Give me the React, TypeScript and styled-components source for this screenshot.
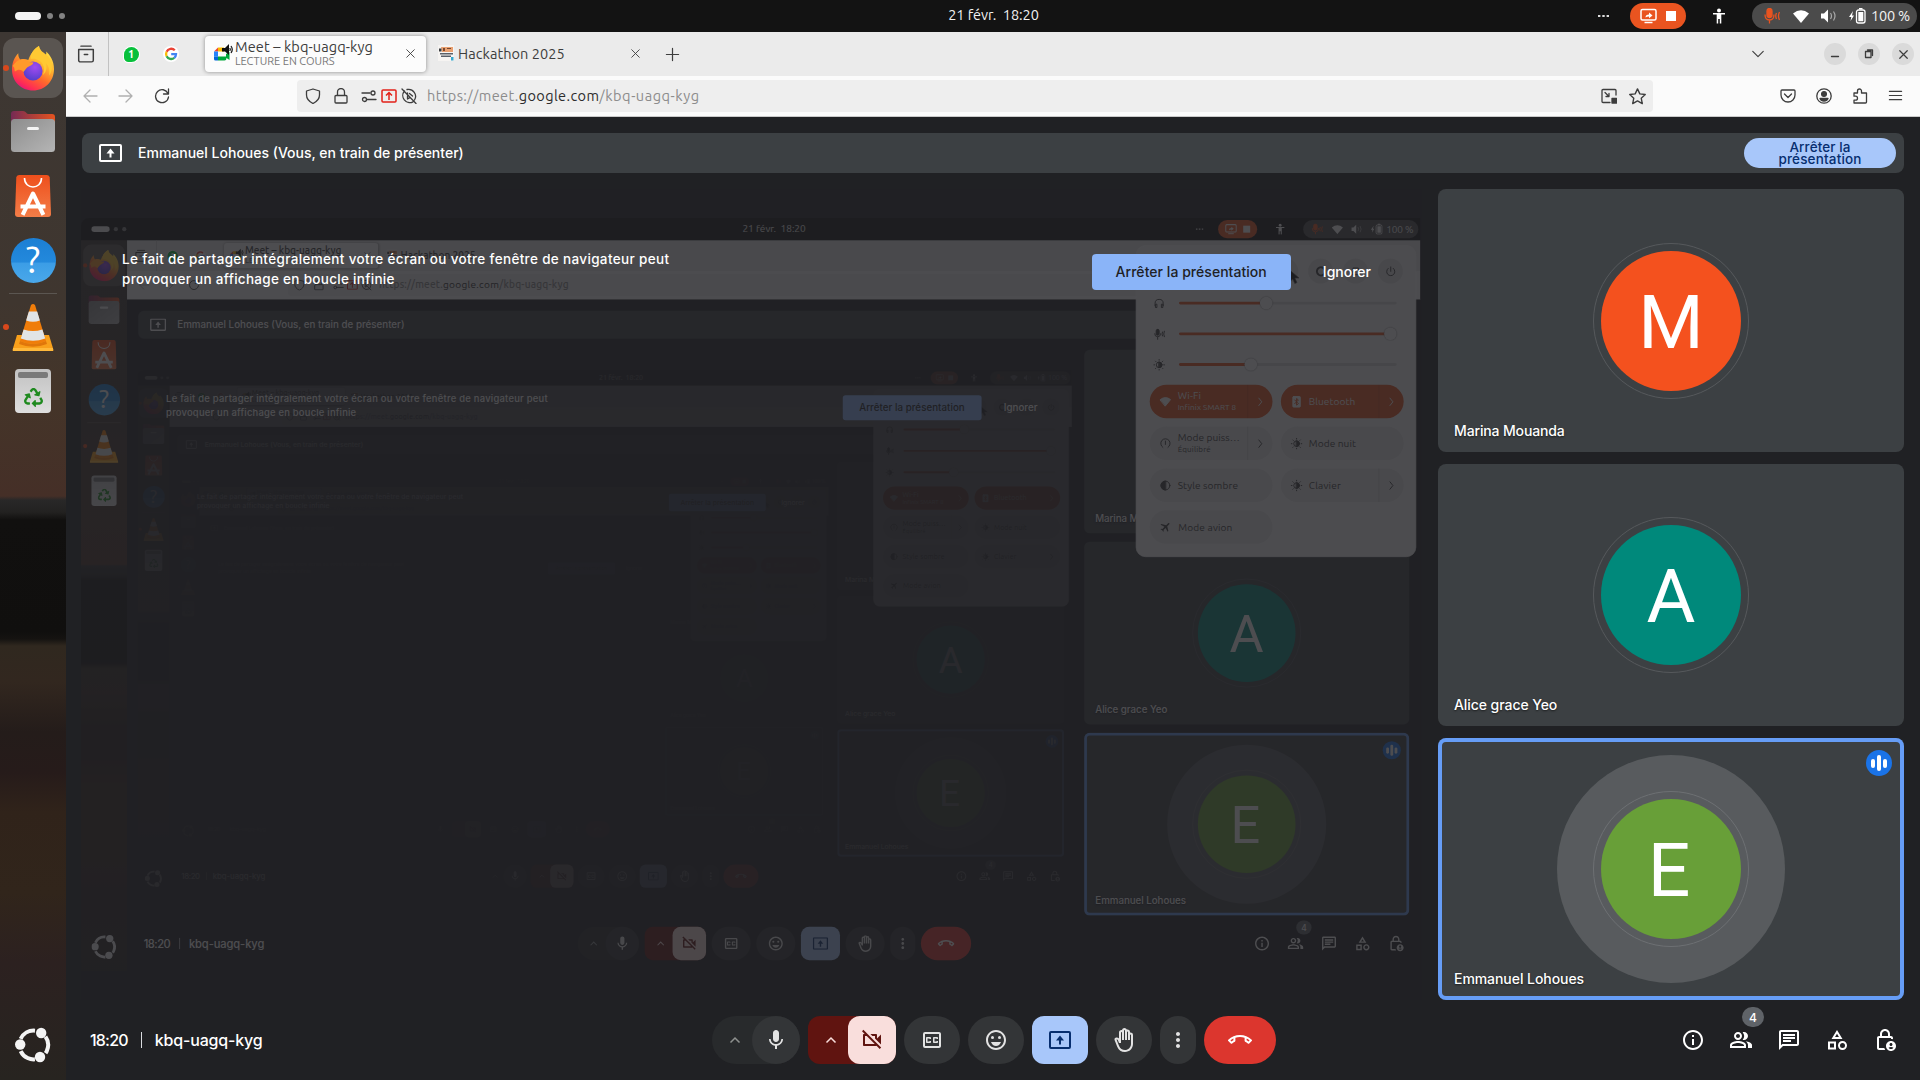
import React, { useLayoutEffect, useRef, useState } from "react";
import styled, { createGlobalStyle, css } from "styled-components";
import { FaRecycle } from "react-icons/fa";
import {
  MdFlight,
  MdMic,
  MdOutlineVideocamOff,
  MdOutlineClosedCaption,
  MdOutlineEmojiEmotions,
  MdOutlineBackHand,
  MdMoreVert,
  MdOutlineCallEnd,
  MdInfoOutline,
  MdOutlinePeopleAlt,
  MdOutlineChat,
  MdOutlineCategory,
  MdOutlineLockPerson,
} from "react-icons/md";

const GlobalStyle = createGlobalStyle`
  * { box-sizing: border-box; }
  html, body { margin: 0; padding: 0; background: #202124; }
  body { width: 1920px; height: 1080px; overflow: hidden; }
`;

const systemFont = `"Ubuntu", "Open Sans", "Noto Sans", sans-serif`;
const meetFont = `"Google Sans", "Inter", "Roboto", sans-serif`;

/* Depth to which the shared screen shows itself. */
const MAX_DEPTH = 3;
const SHARE_SCALE = 0.6976;

/* ---------- text that keeps a fixed measure ---------- */

const LabelText = styled.span`
  display: inline-block;
  white-space: pre;
`;

function Label({ measure, children }: { measure: number; children: string }) {
  const ref = useRef<HTMLSpanElement>(null);
  const [spacing, setSpacing] = useState(0);
  useLayoutEffect(() => {
    if (ref.current) {
      setSpacing((s) => s + (measure - ref.current!.offsetWidth) / children.length);
    }
  }, [measure, children]);
  return (
    <LabelText ref={ref} style={{ letterSpacing: `${spacing}px` }}>
      {children}
    </LabelText>
  );
}

/* ---------- desktop shell ---------- */

const Desktop = styled.div`
  width: 1920px;
  height: 1080px;
  display: grid;
  grid-template-rows: 32px 1048px;
  background: #202124;
  overflow: hidden;
  position: relative;
`;

const TopBar = styled.header`
  display: grid;
  grid-template-columns: 1fr auto 1fr;
  align-items: center;
  background: #131313;
  color: #f2f2f2;
  font: 400 14.5px/32px ${systemFont};
`;

const Workspaces = styled.div`
  display: flex;
  align-items: center;
  gap: 6px;
  padding-left: 15px;
`;

const WorkspaceDot = styled.i<{ $current?: boolean }>`
  width: ${(p) => (p.$current ? 26 : 6)}px;
  height: ${(p) => (p.$current ? 8 : 6)}px;
  border-radius: 4px;
  background: ${(p) => (p.$current ? "#f4f4f4" : "#828282")};
`;

const Clock = styled.div`
  padding: 0 0 2px 67px;
  line-height: 30px;
`;

const Indicators = styled.div`
  display: flex;
  align-items: center;
  justify-content: flex-end;
  padding-right: 3px;
`;

const SharePill = styled.div`
  display: flex;
  align-items: center;
  justify-content: center;
  gap: 9px;
  width: 56px;
  height: 26px;
  border-radius: 13px;
  background: #e95420;
  margin: 0 26px 0 21px;
`;

const StopSquare = styled.i`
  width: 10px;
  height: 10px;
  background: #fff;
`;

const StatusPill = styled.div`
  display: flex;
  align-items: center;
  width: 165px;
  height: 26px;
  border-radius: 13px;
  background: #4b4b4b;
  margin-left: 26px;
  padding-left: 11px;
  line-height: 26px;
`;

const Workspace = styled.div`
  display: grid;
  grid-template-columns: 66px 1854px;
`;

const DockBar = styled.nav`
  display: flex;
  flex-direction: column;
  align-items: center;
  padding: 6px 0 17px;
  background: linear-gradient(
    180deg,
    #3d3733 0px,
    #3f362f 270px,
    #443529 360px,
    #452f27 464px,
    #292828 468px,
    #232221 480px,
    #11100f 488px,
    #100f0e 600px,
    #151311 607px,
    #30281f 614px,
    #32271f 650px,
    #241c1a 700px,
    #261b1a 740px,
    #30231a 780px,
    #31251b 860px,
    #2c2120 930px,
    #272420 1048px
  );
`;

const DockItem = styled.div<{ $active?: boolean; $gap?: number; $running?: boolean }>`
  position: relative;
  display: flex;
  align-items: center;
  justify-content: center;
  width: 60px;
  height: 60px;
  flex: none;
  margin-bottom: ${(p) => p.$gap ?? 4}px;
  border-radius: 12px;
  background: ${(p) => (p.$active ? "#5a5551" : "transparent")};
  ${(p) =>
    p.$running &&
    css`
      &::before {
        content: "";
        position: absolute;
        left: 0;
        top: 27px;
        width: 6px;
        height: 6px;
        border-radius: 50%;
        background: #d9481c;
      }
    `}
`;

const DockDivider = styled.hr`
  width: 48px;
  height: 1px;
  border: 0;
  margin: 0 0 3px;
  background: #5b5651;
`;

const DockSpacer = styled.div`
  flex: 1;
`;

function FirefoxLogo() {
  return (
    <svg width="44" height="46" viewBox="0 0 44 46">
      <defs>
        <linearGradient id="ffBody" x1="0.8" y1="0.05" x2="0.25" y2="1">
          <stop offset="0" stopColor="#ffe54a" />
          <stop offset="0.35" stopColor="#ffb02e" />
          <stop offset="0.6" stopColor="#ff6a2b" />
          <stop offset="0.85" stopColor="#ff2f52" />
          <stop offset="1" stopColor="#e3127f" />
        </linearGradient>
        <radialGradient id="ffGlobe" cx="0.6" cy="0.3" r="0.8">
          <stop offset="0" stopColor="#a24bf0" />
          <stop offset="1" stopColor="#4a3cc8" />
        </radialGradient>
      </defs>
      <path
        d="M28 1c.6 4.600 3.200 7 6 9.600 1.600-.4 1.400-2.600 1.200-4 3.800 3.400 7.800 9.600 7.800 17.400C43 36.500 33.800 45.500 22 45.500S1 36.500 1 24.500C1 17.500 3.500 12 7.300 8.200c-.2 2.600.6 4.600 2 6.200 3-.8 5.500-.6 8 .6 1.600-4.800 5.200-10.800 10.700-14z"
        fill="url(#ffBody)"
      />
      <circle cx="22" cy="26" r="9.600" fill="url(#ffGlobe)" />
      <path
        d="M28 1c-6.500 3.600-8.600 9-8.200 13 3.700-.6 9 .5 11.700 5 2 3.300 2 7.500.3 11 4-3 4.200-8 3-12 3 3 4.400 7.500 3.200 12.500C43 25 41.500 14.500 35 9.500 31.500 7 28.400 4.600 28 1z"
        fill="#ffc933"
      />
      <path
        d="M1.500 21c2.500-4 6-6.500 9.500-6.600 2.500 0 4.600.6 6 2.200 1.800.7 3.400.7 5.400.9-.5 2.300-2.600 3-4.600 4-2.500 1.300-3.600 3.300-5.300 5.500C10 24 7 24 4 26.500c-1-2 .2-4-2.500-5.500z"
        fill="#ff9a2a"
      />
    </svg>
  );
}

function FilesLogo() {
  return (
    <svg width="46" height="44" viewBox="0 0 46 44">
      <defs>
        <linearGradient id="flBack" x1="0" y1="0" x2="1" y2="0">
          <stop offset="0" stopColor="#762a54" />
          <stop offset="1" stopColor="#e6531f" />
        </linearGradient>
        <linearGradient id="flFront" x1="0" y1="0" x2="1" y2="1">
          <stop offset="0" stopColor="#8d8d8d" />
          <stop offset="1" stopColor="#b5b5b5" />
        </linearGradient>
      </defs>
      <path d="M1 4q0-3 3-3h9q2 0 3 1.500T18.500 4H42q3 0 3 3v14H1z" fill="url(#flBack)" />
      <rect x="1" y="9" width="44" height="33" rx="3.500" fill="url(#flFront)" />
      <rect x="17" y="17" width="12" height="3" rx="1.500" fill="#f4f4f4" />
    </svg>
  );
}

function StoreLogo() {
  return (
    <svg width="36" height="42" viewBox="0 0 36 42">
      <defs>
        <linearGradient id="stBag" x1="0" y1="0" x2="0" y2="1">
          <stop offset="0" stopColor="#ee4f1c" />
          <stop offset="1" stopColor="#f37d48" />
        </linearGradient>
      </defs>
      <path d="M4 0h28q2.500 0 2.700 2.500L36 39q0 3-3 3H3q-3 0-3-3L1.300 2.500Q1.500 0 4 0z" fill="url(#stBag)" />
      <path d="M9.500 3c0 12 17 12 17 0" fill="none" stroke="#fff" strokeWidth="1.600" />
      <path
        d="M8.500 38 18 18.500 27.500 38M7.500 31.500h21"
        fill="none"
        stroke="#fff"
        strokeWidth="4"
        strokeLinecap="square"
        strokeLinejoin="round"
      />
    </svg>
  );
}

const HelpBall = styled.div`
  width: 45px;
  height: 45px;
  border-radius: 50%;
  background: linear-gradient(180deg, #1c7fd4 0%, #2389dc 54%, #3b9de6 55%, #4aa8ea 100%);
  color: #fff;
  font: 400 37px/44px ${systemFont};
  text-align: center;
`;

function ConeLogo() {
  return (
    <svg width="42" height="48" viewBox="0 0 42 48">
      <path d="M5 32h32l4.500 15q0 1-1 1h-39q-1 0-1-1z" fill="#f9a01b" />
      <path d="M1 45h40v3H1z" fill="#ffb93b" />
      <path d="M19 2q2-2 4 0l11 36q-13 6-26 0z" fill="#f07d0a" />
      <path d="m16.800 8.500 8.400 0 2.700 9q-7 2.500-13.800 0zM11.600 26.500q9.400 3 18.800 0l2.800 9q-12.200 4.500-24.400 0z" fill="#e1e4e6" />
      <path d="M8 38q13 6 26 0l1 3q-14 5.500-28 0z" fill="#e0760a" />
    </svg>
  );
}

const TrashBin = styled.div`
  width: 36px;
  height: 44px;
  padding: 3px;
  border-radius: 4px;
  background: linear-gradient(180deg, #c2c2c2, #dedede);
  color: #1f8a1f;
  text-align: center;
  font-size: 19px;
  line-height: 0;
`;

const TrashSlot = styled.div`
  height: 6px;
  border-radius: 2px;
  margin-bottom: 10px;
  background: #7a7a7a;
`;

function UbuntuLogo() {
  return (
    <svg width="37" height="36" viewBox="0 0 37 36">
      <circle
        cx="18.700"
        cy="18"
        r="14.400"
        fill="none"
        stroke="#f4f4f4"
        strokeWidth="4"
        pathLength="360"
        strokeDasharray="70 50"
        transform="rotate(205 18.700 18)"
      />
      <circle cx="5.200" cy="17.500" r="5.200" fill="#f4f4f4" />
      <circle cx="26.200" cy="6" r="5.200" fill="#f4f4f4" />
      <circle cx="25" cy="30" r="5.200" fill="#f4f4f4" />
    </svg>
  );
}

function Dock() {
  return (
    <DockBar>
      <DockItem $active $running>
        <FirefoxLogo />
      </DockItem>
      <DockItem $gap={4}>
        <FilesLogo />
      </DockItem>
      <DockItem>
        <StoreLogo />
      </DockItem>
      <DockItem $gap={3}>
        <HelpBall>?</HelpBall>
      </DockItem>
      <DockDivider />
      <DockItem $running>
        <ConeLogo />
      </DockItem>
      <DockItem>
        <TrashBin>
          <TrashSlot />
          <FaRecycle />
        </TrashBin>
      </DockItem>
      <DockSpacer />
      <UbuntuLogo />
    </DockBar>
  );
}

/* ---------- browser chrome ---------- */

const Browser = styled.section`
  display: grid;
  grid-template-rows: 44px 41px 963px;
  font-family: ${systemFont};
`;

const TabStrip = styled.div`
  display: flex;
  align-items: center;
  background: #ebebeb;
  color: #3d3d3d;
`;

const FirefoxView = styled.div`
  display: flex;
  align-items: center;
  padding-left: 11px;
  width: 43px;
  height: 44px;
  border-right: 1px solid #c2c2c2;
`;

const PinnedTab = styled.div<{ $first?: boolean }>`
  display: flex;
  justify-content: center;
  width: 40px;
  margin-left: ${(p) => (p.$first ? 2 : 0)}px;
`;

const Tab = styled.div<{ $active?: boolean }>`
  display: flex;
  align-items: center;
  width: 221px;
  height: 36px;
  border-radius: 4px;
  padding: 0 10px 2px 8px;
  margin-left: 4px;
  font-size: 14.5px;
  ${(p) =>
    p.$active &&
    css`
      margin-left: 14px;
      background: #fcfcfc;
      box-shadow: 0 0 4px rgba(0, 0, 0, 0.4);
    `}
`;

const TabTitle = styled.div<{ $inset: number }>`
  flex: 1;
  padding-left: ${(p) => p.$inset}px;
  line-height: 17px;
`;

const TabStatus = styled.div`
  font-size: 11px;
  line-height: 13px;
  color: #777;
`;

const NewTab = styled.div`
  display: flex;
  margin-left: 14px;
`;

const StripSpacer = styled.div`
  flex: 1;
`;

const WindowButtons = styled.div`
  display: flex;
  gap: 12px;
  padding: 0 6px 0 59px;
`;

const WindowButton = styled.div`
  display: flex;
  align-items: center;
  justify-content: center;
  width: 22px;
  height: 22px;
  border-radius: 50%;
  background: #dadada;
`;

const NavBar = styled.div`
  display: grid;
  grid-template-columns: 231px 1356px 1fr;
  align-items: center;
  background: #fbfbfb;
  border-bottom: 1px solid #cacaca;
  color: #3d3d3d;
`;

const NavButtons = styled.div`
  display: flex;
  gap: 20px;
  padding-left: 16px;
`;

const UrlField = styled.div`
  display: flex;
  align-items: center;
  height: 32px;
  border-radius: 4px;
  background: #eee;
  padding: 0 7px 0 8px;
`;

const UrlIcons = styled.div<{ $gap: number }>`
  display: flex;
  align-items: center;
  gap: ${(p) => p.$gap}px;
`;

const Url = styled.div`
  flex: 1;
  padding-left: 10px;
  font-size: 14.5px;
  line-height: 30px;
  color: #8c8c8c;
  b {
    font-weight: 400;
    color: #2c2c2c;
  }
`;

const ToolIcons = styled.div`
  display: flex;
  gap: 20px;
  justify-content: flex-end;
  padding-right: 17px;
`;

const strokeIcons: Record<string, React.ReactNode> = {
  view: <path d="M3.500 1h9M1.500 4h13v9.500a1.500 1.500 0 0 1-1.500 1.500H3a1.500 1.500 0 0 1-1.500-1.500zM6.500 8.500h3" />,
  close: <path d="m4 4 8 8M12 4l-8 8" />,
  tabClose: <path d="m2.500 2.500 11 11M13.500 2.500l-11 11" />,
  plus: <path d="M8 1.500v13M1.500 8h13" />,
  down: <path d="m2 5 6 6 6-6" />,
  min: <path d="M4.500 10.500h7" />,
  restore: <path d="M4.500 5.500h5.500v6H4.500zM6.500 4h5v5.500" />,
  back: <path d="M15 8H2M8 2 2 8l6 6" />,
  forward: <path d="M1 8h13M8 2l6 6-6 6" />,
  reload: <path d="M14 5.500A6.500 6.500 0 1 0 14.500 9M14.500 1v5h-5" />,
  shield: <path d="M8 1 14.500 3v4c0 4-2.500 6.500-6.500 8.500C4 13.500 1.500 11 1.500 7V3z" />,
  lock: <path d="M3 7.500h10a1 1 0 0 1 1 1V14a1 1 0 0 1-1 1H3a1 1 0 0 1-1-1V8.500a1 1 0 0 1 1-1zM4.500 7.500V4a3.500 3.500 0 0 1 7 0v3.500" />,
  perms: (
    <>
      <path d="M1 5h8M6 11.500h9" />
      <circle cx="12" cy="5" r="2" />
      <circle cx="3.500" cy="11.500" r="2" />
    </>
  ),
  autoplay: (
    <path d="M3.500 3A7 7 0 0 0 12 13.800M6 1.500A7 7 0 0 1 13.500 12M1 1l14 14.500M6.500 5v6l2.200-1.400M8.500 5.500 11.500 8" />
  ),
  pip: (
    <>
      <path d="M15 7V2.500a1 1 0 0 0-1-1H2a1 1 0 0 0-1 1v11a1 1 0 0 0 1 1h7M4 4.500l4 4M8 5.500v3H5" />
      <rect x="11" y="10.500" width="4.500" height="4.500" fill="currentColor" />
    </>
  ),
  star: <path d="m8 .8 2.200 4.700 5.100.6-3.800 3.500 1 5.100L8 12.200l-4.500 2.500 1-5.100L.7 6.100l5.100-.6z" />,
  pocket: <path d="M2 2h12a1 1 0 0 1 1 1v4a7 7 0 0 1-14 0V3a1 1 0 0 1 1-1zM4.500 6 8 9.500 11.500 6" />,
  account: (
    <>
      <circle cx="8" cy="8" r="7.200" />
      <circle cx="8" cy="6" r="2.400" fill="currentColor" />
      <path d="M4 10.500h8q-1 2.500-4 2.500t-4-2.500z" fill="currentColor" />
    </>
  ),
  puzzle: <path d="M2 15h11.500a1 1 0 0 0 1-1V5H9.500V3a2 2 0 0 0-4 0v2H2v3.200h1.500a2 2 0 0 1 0 4H2z" />,
  menu: <path d="M1.500 3.500h13M1.500 8h13M1.500 12.500h13" />,
};

const IconSvg = styled.svg<{ $size: number; $color?: string }>`
  width: ${(p) => p.$size}px;
  height: ${(p) => p.$size}px;
  flex: none;
  fill: none;
  stroke: currentColor;
  stroke-width: 1.3;
  stroke-linecap: round;
  stroke-linejoin: round;
  color: ${(p) => p.$color ?? "inherit"};
`;

function Icon({ name, size = 16, color }: { name: string; size?: number; color?: string }) {
  return (
    <IconSvg viewBox="0 0 16 16" $size={size} $color={color}>
      {strokeIcons[name]}
    </IconSvg>
  );
}

const ShareMark = styled.svg`
  width: 16px;
  height: 14px;
  flex: none;
  fill: none;
  stroke: #e22118;
  stroke-width: 1.5;
`;

function GoogleG() {
  return (
    <svg width="16" height="16" viewBox="0 0 16 16">
      <circle cx="8" cy="8" r="8" fill="#fff" />
      <g fill="none" strokeWidth="2.300">
        <path d="M11.800 4.300A5 5 0 0 0 3.600 5.800" stroke="#ea4335" />
        <path d="M3.600 5.800a5 5 0 0 0 0 4.400" stroke="#fbbc05" />
        <path d="M3.600 10.200a5 5 0 0 0 7.700 1.600" stroke="#34a853" />
        <path d="M11.300 11.800A5 5 0 0 0 13 8.200H8.200" stroke="#4285f4" />
      </g>
    </svg>
  );
}

const ChatBadge = styled.div`
  width: 15px;
  height: 15px;
  border-radius: 50% 50% 50% 30%;
  background: #08c03c;
  box-shadow: 0 0 0 1px #fff;
  color: #fff;
  font: 700 11px/15px ${systemFont};
  text-align: center;
`;

function MeetLogo() {
  return (
    <svg width="22" height="20" viewBox="0 0 22 20">
      <path d="M1 8.500 5 4.500v4z" fill="#ea4335" />
      <path d="M5 4.500h6v4H5z" fill="#fbbc04" />
      <path d="M1 8.500h4v5H1z" fill="#2684fc" />
      <path d="M1 13.500h4v4H2.500Q1 17.500 1 16z" fill="#0066da" />
      <path d="M5 13.500h8V11l3.500-2v8l-3-2q0 2.500-2 2.500H5z" fill="#00a83a" />
      <path d="M9 5h3l4-4v11l-4-3.500H9z" fill="#111" />
      <path d="M18 3q2.500 3.500 0 7M16.800 5q1 1.500 0 3" fill="none" stroke="#111" strokeWidth="1.200" />
    </svg>
  );
}

function HackLogo() {
  return (
    <svg width="16" height="16" viewBox="0 0 16 16">
      <path d="M0 0h16v16H0z" fill="#f6f4f2" />
      <path d="M3 2h12v5H4z" fill="#e9a070" />
      <path d="M1 3.500h2.500v3H1z" fill="#3a3d40" />
      <path d="M2 8h13v1.500H2zM3 10.500h10V12H3z" fill="#5a6068" />
      <path d="M13 12h2.500v3.500H13z" fill="#35a8cf" />
      <path d="M5 3h2v3H5zM9 3h4v1H9z" fill="#7a4a30" />
    </svg>
  );
}

function BrowserChrome() {
  return (
    <>
      <TabStrip>
        <FirefoxView>
          <Icon name="view" size={18} />
        </FirefoxView>
        <PinnedTab $first>
          <ChatBadge>1</ChatBadge>
        </PinnedTab>
        <PinnedTab>
          <GoogleG />
        </PinnedTab>
        <Tab $active>
          <MeetLogo />
          <TabTitle $inset={0}>
            <Label measure={138}>Meet – kbq-uagq-kyg</Label>
            <TabStatus>
              <Label measure={100}>LECTURE EN COURS</Label>
            </TabStatus>
          </TabTitle>
          <Icon name="tabClose" size={11} />
        </Tab>
        <Tab>
          <HackLogo />
          <TabTitle $inset={4}>
            <Label measure={107}>Hackathon 2025</Label>
          </TabTitle>
          <Icon name="tabClose" size={11} />
        </Tab>
        <NewTab>
          <Icon name="plus" size={15} />
        </NewTab>
        <StripSpacer />
        <Icon name="down" size={14} />
        <WindowButtons>
          <WindowButton>
            <Icon name="min" />
          </WindowButton>
          <WindowButton>
            <Icon name="restore" />
          </WindowButton>
          <WindowButton>
            <Icon name="close" size={15} />
          </WindowButton>
        </WindowButtons>
      </TabStrip>
      <NavBar>
        <NavButtons>
          <Icon name="back" color="#b0b0b0" />
          <Icon name="forward" color="#b0b0b0" />
          <Icon name="reload" />
        </NavButtons>
        <UrlField>
          <UrlIcons $gap={12}>
            <Icon name="shield" />
            <Icon name="lock" />
            <UrlIcons $gap={4}>
              <Icon name="perms" />
              <ShareMark viewBox="0 0 16 14">
                <rect x="1" y="1" width="14" height="12" rx="1" />
                <path d="M8 11V4M5 6.500 8 3.500l3 3" />
              </ShareMark>
              <Icon name="autoplay" />
            </UrlIcons>
          </UrlIcons>
          <Url>
            <Label measure={92}>https://meet.</Label>
            <b>
              <Label measure={81}>google.com</Label>
            </b>
            <Label measure={100}>/kbq-uagq-kyg</Label>
          </Url>
          <UrlIcons $gap={12}>
            <Icon name="pip" />
            <Icon name="star" size={17} />
          </UrlIcons>
        </UrlField>
        <ToolIcons>
          <Icon name="pocket" />
          <Icon name="account" />
          <Icon name="puzzle" />
          <Icon name="menu" size={15} />
        </ToolIcons>
      </NavBar>
    </>
  );
}

/* ---------- Meet page ---------- */

const MeetPage = styled.main`
  display: grid;
  grid-template-rows: 40px 827px 80px;
  padding: 16px 16px 0;
  background: #202124;
  color: #fff;
  font: 500 14px/20px ${meetFont};
`;

const PresenterBar = styled.div`
  display: flex;
  align-items: center;
  justify-content: space-between;
  border-radius: 8px;
  background: #3c4043;
  padding: 0 8px 0 17px;
`;

const PresenterName = styled.div`
  display: flex;
  align-items: center;
  gap: 16px;
`;

const StopPill = styled.button`
  width: 152px;
  height: 30px;
  border: 0;
  border-radius: 15px;
  padding: 0;
  background: #a8c7fa;
  color: #062e6f;
  font: 500 13.5px/12px ${meetFont};
`;

const CallBody = styled.div`
  display: grid;
  grid-template-columns: 1340px 466px;
  column-gap: 16px;
  padding-top: 16px;
`;

const Stage = styled.div`
  position: relative;
  display: flex;
  align-items: center;
`;

const SharedFrame = styled.div`
  width: 1340px;
  height: 753px;
  margin-left: -1px;
  border-radius: 8px 0 0 0;
  overflow: hidden;
`;

const Shrunk = styled.div`
  width: 1920px;
  height: 1080px;
  transform: scale(${SHARE_SCALE});
  transform-origin: 0 0;
`;

const Veil = styled.div`
  position: absolute;
  inset: 0 0 0 -1px;
  background: rgba(32, 33, 36, 0.8);
`;

const LoopWarning = styled.div`
  position: absolute;
  left: 40px;
  right: 51px;
  top: 53px;
  height: 60px;
  display: flex;
  align-items: center;
  gap: 32px;
`;

const WarningText = styled.p`
  flex: 1;
  margin: 0;
  padding-bottom: 7px;
  font: 500 13.5px/20px ${meetFont};
`;

const WarningButton = styled.button<{ $primary?: boolean }>`
  height: 36px;
  border: 0;
  border-radius: 4px;
  padding: 0 ${(p) => (p.$primary ? 24 : 0)}px;
  background: ${(p) => (p.$primary ? "#8ab4f8" : "transparent")};
  color: ${(p) => (p.$primary ? "#202124" : "#fff")};
  font: 500 14px/36px ${meetFont};
`;

const TileColumn = styled.div`
  display: grid;
  grid-template-rows: 263px 262px 262px;
  gap: 12px;
`;

const Tile = styled.article<{ $speaking?: boolean }>`
  position: relative;
  display: grid;
  place-items: center;
  border-radius: 8px;
  background: #3c4043;
  ${(p) => p.$speaking && "box-shadow: inset 0 0 0 4px #669df6;"}
`;

const Halo = styled.div<{ $speaking?: boolean }>`
  display: grid;
  place-items: center;
  width: 228px;
  height: 228px;
  border-radius: 50%;
  background: ${(p) => (p.$speaking ? "#585b5e" : "transparent")};
`;

const Ring = styled.div<{ $speaking?: boolean }>`
  display: grid;
  place-items: center;
  width: 156px;
  height: 156px;
  border-radius: 50%;
  border: 1px solid ${(p) => (p.$speaking ? "#6d7073" : "#56595c")};
`;

const Avatar = styled.div<{ $color: string; $nudge: number }>`
  width: 140px;
  height: 140px;
  border-radius: 50%;
  background: ${(p) => p.$color};
  text-align: center;
  text-indent: ${(p) => p.$nudge}px;
  font: 400 75px/142px "Roboto", sans-serif;
`;

const TileName = styled.div`
  position: absolute;
  left: 16px;
  bottom: 11px;
  text-shadow: 0 1px 2px rgba(0, 0, 0, 0.6);
`;

const VoiceBadge = styled.div`
  position: absolute;
  top: 12px;
  right: 12px;
  display: flex;
  align-items: center;
  justify-content: center;
  gap: 2px;
  width: 26px;
  height: 26px;
  border-radius: 50%;
  background: #1a73e8;
`;

const VoiceBar = styled.i<{ $h: number }>`
  width: 4px;
  height: ${(p) => p.$h}px;
  border-radius: 2px;
  background: #fff;
`;

const Footer = styled.footer`
  display: grid;
  grid-template-columns: 1fr auto 1fr;
  align-items: center;
  padding: 0 7px 0 8px;
`;

const MeetingInfo = styled.div`
  display: flex;
  align-items: center;
  gap: 13px;
  font-size: 16px;
`;

const InfoDivider = styled.i`
  width: 1px;
  height: 16px;
  background: #dadce0;
`;

const Controls = styled.div`
  display: flex;
  gap: 8px;
`;

const ControlGroup = styled.div<{ $off?: boolean }>`
  display: flex;
  justify-content: space-between;
  align-items: center;
  width: 88px;
  height: 48px;
  padding-left: 17px;
  border-radius: ${(p) => (p.$off ? 12 : 24)}px;
  background: ${(p) => (p.$off ? "#601410" : "#282a2c")};
  color: ${(p) => (p.$off ? "#f9dedc" : "#8e918f")};
`;

const controlKinds = {
  plain: css`
    background: #333537;
    color: #e3e3e3;
    border-radius: 24px;
  `,
  off: css`
    background: #f9dedc;
    color: #601410;
    border-radius: 12px;
  `,
  active: css`
    background: #a8c7fa;
    color: #062e6f;
    border-radius: 12px;
  `,
  leave: css`
    background: #dc362e;
    color: #fff;
    border-radius: 24px;
  `,
};

const Control = styled.div<{ $kind?: keyof typeof controlKinds; $w?: number }>`
  display: flex;
  align-items: center;
  justify-content: center;
  width: ${(p) => p.$w ?? 56}px;
  height: 48px;
  font-size: 24px;
  ${(p) => controlKinds[p.$kind ?? "plain"]}
`;

const PanelIcons = styled.div`
  display: flex;
  justify-content: flex-end;
  gap: 24px;
  font-size: 24px;
`;

const PanelIcon = styled.div`
  position: relative;
  display: flex;
`;

const CountBadge = styled.span`
  position: absolute;
  left: 13px;
  top: -21px;
  width: 22px;
  height: 20px;
  border-radius: 10px;
  background: #5f6368;
  font: 500 12px/21px ${meetFont};
  text-align: center;
`;

function PresentIcon({ width, height }: { width: number; height: number }) {
  return (
    <svg width={width} height={height} viewBox={`0 0 ${width} ${height}`} fill="none" stroke="currentColor" strokeWidth="2">
      <rect x="1" y="1" width={width - 2} height={height - 2} rx="1" />
      <g transform={`translate(${width / 2} ${height / 2})`}>
        <path d="M0 4.500V-2" />
        <path d="M-4 .5 0-4.500l4 5z" fill="currentColor" stroke="none" />
      </g>
    </svg>
  );
}

function Caret() {
  return (
    <svg width="12" height="8" viewBox="0 0 12 8" fill="none" stroke="currentColor" strokeWidth="1.500">
      <path d="M1.500 6.500 6 2l4.500 4.500" />
    </svg>
  );
}

function Warning() {
  return (
    <LoopWarning>
      <WarningText>
        <Label measure={547}>Le fait de partager intégralement votre écran ou votre fenêtre de navigateur peut</Label>
        <br />
        <Label measure={273}>provoquer un affichage en boucle infinie</Label>
      </WarningText>
      <WarningButton $primary>
        <Label measure={151}>Arrêter la présentation</Label>
      </WarningButton>
      <WarningButton>
        <Label measure={48}>Ignorer</Label>
      </WarningButton>
    </LoopWarning>
  );
}

const participants = [
  { name: "Marina Mouanda", measure: 111, color: "#f4511e", speaking: false, nudge: 0 },
  { name: "Alice grace Yeo", measure: 103, color: "#00897b", speaking: false, nudge: 0 },
  { name: "Emmanuel Lohoues", measure: 130, color: "#689f38", speaking: true, nudge: -4 },
];

function Meet({ depth }: { depth: number }) {
  return (
    <MeetPage>
      <PresenterBar>
        <PresenterName>
          <PresentIcon width={23} height={18} />
          <Label measure={326}>Emmanuel Lohoues (Vous, en train de présenter)</Label>
        </PresenterName>
        <StopPill>
          <Label measure={61}>Arrêter la</Label>
          <br />
          <Label measure={83}>présentation</Label>
        </StopPill>
      </PresenterBar>
      <CallBody>
        <Stage>
          <SharedFrame>
            {depth < MAX_DEPTH && (
              <Shrunk>
                <Screen depth={depth + 1} />
              </Shrunk>
            )}
          </SharedFrame>
          <Veil />
          <Warning />
        </Stage>
        <TileColumn>
          {participants.map((p) => (
            <Tile key={p.name} $speaking={p.speaking}>
              <Halo $speaking={p.speaking}>
                <Ring $speaking={p.speaking}>
                  <Avatar $color={p.color} $nudge={p.nudge}>
                    {p.name[0]}
                  </Avatar>
                </Ring>
              </Halo>
              <TileName>
                <Label measure={p.measure}>{p.name}</Label>
              </TileName>
              {p.speaking && (
                <VoiceBadge>
                  <VoiceBar $h={9} />
                  <VoiceBar $h={16} />
                  <VoiceBar $h={9} />
                </VoiceBadge>
              )}
            </Tile>
          ))}
        </TileColumn>
      </CallBody>
      <Footer>
        <MeetingInfo>
          <Label measure={38}>18:20</Label>
          <InfoDivider />
          <Label measure={108}>kbq-uagq-kyg</Label>
        </MeetingInfo>
        <Controls>
          <ControlGroup>
            <Caret />
            <Control $w={48}>
              <MdMic />
            </Control>
          </ControlGroup>
          <ControlGroup $off>
            <Caret />
            <Control $w={48} $kind="off">
              <MdOutlineVideocamOff />
            </Control>
          </ControlGroup>
          <Control>
            <MdOutlineClosedCaption />
          </Control>
          <Control>
            <MdOutlineEmojiEmotions />
          </Control>
          <Control $kind="active">
            <PresentIcon width={22} height={18} />
          </Control>
          <Control>
            <MdOutlineBackHand />
          </Control>
          <Control $w={36}>
            <MdMoreVert />
          </Control>
          <Control $w={72} $kind="leave">
            <MdOutlineCallEnd />
          </Control>
        </Controls>
        <PanelIcons>
          <PanelIcon>
            <MdInfoOutline />
          </PanelIcon>
          <PanelIcon>
            <MdOutlinePeopleAlt />
            <CountBadge>4</CountBadge>
          </PanelIcon>
          <PanelIcon>
            <MdOutlineChat />
          </PanelIcon>
          <PanelIcon>
            <MdOutlineCategory />
          </PanelIcon>
          <PanelIcon>
            <MdOutlineLockPerson />
          </PanelIcon>
        </PanelIcons>
      </Footer>
    </MeetPage>
  );
}

/* ---------- GNOME quick settings ---------- */

const QuickMenu = styled.aside`
  position: absolute;
  left: 1512px;
  top: 39px;
  width: 402px;
  height: 447px;
  border-radius: 14px;
  background: #fafafa;
  border: 1px solid #fff;
  padding: 18px 18px 0 19px;
  color: #3d3d3d;
  font: 400 14.5px/17px ${systemFont};
`;

const MenuTopRow = styled.div`
  display: flex;
  justify-content: flex-end;
  gap: 14px;
  margin-bottom: 6px;
`;

const RoundButton = styled.div`
  display: grid;
  place-items: center;
  width: 36px;
  height: 36px;
  border-radius: 50%;
  background: #e6e6e6;
`;

const SliderRow = styled.div`
  display: flex;
  align-items: center;
  gap: 20px;
  height: 44px;
  padding: 0 9px 0 5px;
`;

const Track = styled.div<{ $value: number }>`
  position: relative;
  flex: 1;
  height: 4px;
  border-radius: 2px;
  background: linear-gradient(90deg, #e95420 ${(p) => p.$value}%, #dcdcdc ${(p) => p.$value}%);
  &::after {
    content: "";
    position: absolute;
    top: -7px;
    left: calc(${(p) => p.$value}% - 9px);
    width: 18px;
    height: 18px;
    border-radius: 50%;
    background: #fff;
    box-shadow: 0 0 2px #666;
  }
`;

const ToggleGrid = styled.div`
  display: grid;
  grid-template-columns: 176px 176px;
  gap: 12px;
  margin-top: 7px;
`;

const Toggle = styled.div<{ $on?: boolean }>`
  display: flex;
  align-items: center;
  height: 48px;
  border-radius: 24px;
  padding-left: 14px;
  gap: 9px;
  background: ${(p) => (p.$on ? "#e95420" : "#e9e9e9")};
  color: ${(p) => (p.$on ? "#fff" : "#3d3d3d")};
`;

const ToggleText = styled.div`
  flex: 1;
  padding-bottom: 2px;
  small {
    display: block;
    font-size: 11.5px;
    line-height: 15px;
  }
`;

const ToggleMore = styled.div`
  display: grid;
  place-items: center;
  width: 36px;
  height: 48px;
  border-left: 1px solid rgba(0, 0, 0, 0.12);
`;

const Plane = styled(MdFlight)`
  width: 18px;
  height: 18px;
  transform: rotate(45deg);
`;

const menuIcons: Record<string, React.ReactNode> = {
  head: <path d="M2.500 11V8a5.500 5.500 0 0 1 11 0v3M3 9.500v4h2v-4zM11 9.500v4h2v-4z" />,
  mic: (
    <>
      <rect x="4" y="1.500" width="4" height="8" rx="2" fill="currentColor" />
      <path d="M2 7.500a4 4 0 0 0 8 0M6 12v3M12.500 5q-1.500 3 0 5.500M15 4q-1.800 4 0 7.500" />
    </>
  ),
  bright: (
    <>
      <circle cx="8" cy="8" r="3.800" />
      <path d="M8 4.200a3.800 3.800 0 0 1 0 7.600z" fill="currentColor" />
      <path d="M8 .8v1M8 14.200v1M.8 8h1M14.200 8h1M3 3l.6.6M12.400 12.400l.6.6M3 13l.6-.6M12.400 3.600 13 3" />
    </>
  ),
  wifi: <path d="M1 5q7-5.500 14 0L8 13.500z" fill="currentColor" />,
  bt: (
    <>
      <rect x="3" y=".8" width="10" height="14.400" rx="1" fill="currentColor" />
      <path d="m5.500 5.500 5 5L8 12.500v-9l2.500 2-5 5" stroke="#e95420" />
    </>
  ),
  power: <path d="M4.500 13a6.300 6.300 0 1 1 7 0M8 4.500V9" />,
  off: <path d="M4.500 4a5.500 5.500 0 1 0 7 0M8 2v6" />,
  dark: (
    <>
      <circle cx="8" cy="8" r="6" />
      <path d="M8 2a6 6 0 0 0 0 12z" fill="currentColor" />
    </>
  ),
  bell: <path d="M4.500 3.500h7v5h2v4H3v-4h1.500z" />,
  cog: <circle cx="8" cy="8" r="5.500" strokeWidth="2.600" strokeDasharray="3 1" />,
  more: <path d="m6 3 4 5-4 5" />,
};

function MenuIcon({ name, size = 17 }: { name: string; size?: number }) {
  if (name === "plane") return <Plane />;
  return (
    <IconSvg viewBox="0 0 16 16" $size={size}>
      {menuIcons[name]}
    </IconSvg>
  );
}

const toggles = [
  { icon: "wifi", title: "Wi-Fi", note: "Infinix SMART 8", on: true, more: true, m: 34, nm: 84 },
  { icon: "bt", title: "Bluetooth", on: true, more: true, m: 67 },
  { icon: "power", title: "Mode puiss…", note: "Équilibré", more: true, m: 89, nm: 48 },
  { icon: "bright", title: "Mode nuit", m: 68 },
  { icon: "dark", title: "Style sombre", m: 87 },
  { icon: "bright", title: "Clavier", more: true, m: 46 },
  { icon: "plane", title: "Mode avion", m: 78 },
];

function QuickSettings() {
  return (
    <QuickMenu>
      <MenuTopRow>
        {["dark", "cog", "bell", "off"].map((n) => (
          <RoundButton key={n}>
            <MenuIcon name={n} />
          </RoundButton>
        ))}
      </MenuTopRow>
      <SliderRow>
        <MenuIcon name="head" />
        <Track $value={40} />
      </SliderRow>
      <SliderRow>
        <MenuIcon name="mic" />
        <Track $value={97} />
      </SliderRow>
      <SliderRow>
        <MenuIcon name="bright" />
        <Track $value={33} />
      </SliderRow>
      <ToggleGrid>
        {toggles.map((t) => (
          <Toggle key={t.title} $on={t.on}>
            <MenuIcon name={t.icon} />
            <ToggleText>
              <Label measure={t.m}>{t.title}</Label>
              {t.note && (
                <small>
                  <Label measure={t.nm!}>{t.note}</Label>
                </small>
              )}
            </ToggleText>
            {t.more && (
              <ToggleMore>
                <MenuIcon name="more" />
              </ToggleMore>
            )}
          </Toggle>
        ))}
      </ToggleGrid>
    </QuickMenu>
  );
}

const Pointer = styled.svg`
  position: absolute;
  left: 1732px;
  top: 74px;
`;

/* ---------- whole screen ---------- */

const StatusIcons = styled.div`
  display: flex;
  align-items: center;
  gap: 12px;
  margin-right: 5px;
`;

function Status() {
  return (
    <Indicators>
      <svg width="11" height="4" viewBox="0 0 11 4" fill="#ddd">
        <path d="M0 1h2.400v2H0zM4.300 1h2.400v2H4.300zM8.600 1H11v2H8.600z" />
      </svg>
      <SharePill>
        <svg width="17" height="16" viewBox="0 0 17 16" fill="none" stroke="#fff" strokeWidth="1.500">
          <rect x="1" y="1.500" width="15" height="10.500" rx="1.500" />
          <path d="M4.500 14.500h8" />
          <path d="M5.500 9.500q0-3 3.500-3V4.500l3.500 3L9 10.200V8.500q-2 0-3.500 1z" fill="#fff" stroke="none" />
        </svg>
        <StopSquare />
      </SharePill>
      <svg width="14" height="16" viewBox="0 0 14 16" fill="#fff">
        <circle cx="7" cy="2.400" r="2" />
        <path d="M1 5h12v1.500H9.300V15.500H7.800V11H6.200v4.500H4.700V6.500H1z" />
      </svg>
      <StatusPill>
        <StatusIcons>
          <svg width="18" height="16" viewBox="0 0 18 16" fill="none" stroke="#e95420" strokeWidth="1.300">
            <rect x="4" y="0.500" width="5" height="9" rx="2.500" fill="#e95420" />
            <path d="M2 6.500q0 5.500 4.500 5.500T11 6.500M6.500 12v3.500M13.500 5q-1.500 3 0 6M16.500 4q-2 4 0 8" />
          </svg>
          <svg width="16" height="13" viewBox="0 0 16 13" fill="#fff">
            <path d="M0 3.500q8-6.500 16 0L8 13z" />
          </svg>
          <svg width="16" height="14" viewBox="0 0 16 14" fill="#fff">
            <path d="M0 4.500h3L7 .5v13L3 9.500H0z" />
            <path d="M9.500 4q2 3 0 6M12.500 2.500q3 4.500 0 9" fill="none" stroke="#aaa" strokeWidth="1.200" />
          </svg>
          <svg width="17" height="16" viewBox="0 0 17 16" fill="#fff">
            <path d="M4 3 0 9h2.300L1.500 13 5 7.500H3z" />
            <rect x="7.500" y="2" width="8.500" height="13" rx="2" fill="none" stroke="#fff" strokeWidth="1.300" />
            <path d="M9.300 4h5v9.200h-5zM10 0h3.500v1.500H10z" />
          </svg>
        </StatusIcons>
        <Label measure={39}>100 %</Label>
      </StatusPill>
    </Indicators>
  );
}

function Screen({ depth }: { depth: number }) {
  return (
    <Desktop>
      <TopBar>
        <Workspaces>
          <WorkspaceDot $current />
          <WorkspaceDot />
          <WorkspaceDot />
        </Workspaces>
        <Clock>
          <Label measure={91}>21 févr.  18:20</Label>
        </Clock>
        <Status />
      </TopBar>
      <Workspace>
        <Dock />
        <Browser>
          <BrowserChrome />
          <Meet depth={depth} />
        </Browser>
      </Workspace>
      {depth > 0 && (
        <>
          <QuickSettings />
          <Pointer width="16" height="22" viewBox="0 0 16 22">
            <path d="M1 1v16l4-3.500 3 6.500 3-1.500L8 12h6z" fill="#111" stroke="#555" />
          </Pointer>
        </>
      )}
    </Desktop>
  );
}

export default function App() {
  return (
    <>
      <GlobalStyle />
      <Screen depth={0} />
    </>
  );
}
